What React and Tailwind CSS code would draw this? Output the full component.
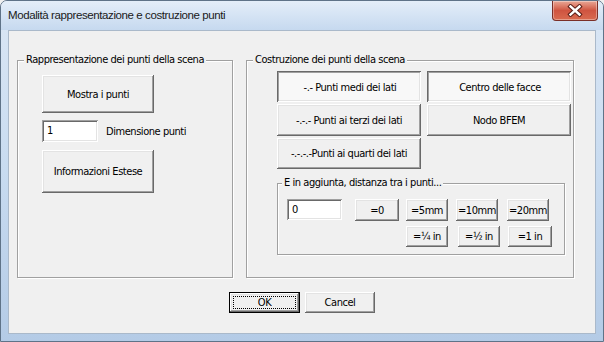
import React from "react";

const F = "font-['DejaVu_Sans_Condensed','DejaVu_Sans',sans-serif] text-[11px] leading-[13px] tracking-[-0.45px] text-black";
const raised =
  "bg-[#f0f0f0] shadow-[inset_-1px_-1px_0_#696969,inset_1px_1px_0_#ffffff,inset_-2px_-2px_0_#a0a0a0,inset_2px_2px_0_#e3e3e3]";
const pressed =
  "bg-[#f8f8f8] shadow-[inset_1px_1px_0_#696969,inset_-1px_-1px_0_#ffffff,inset_2px_2px_0_#a0a0a0,inset_-2px_-2px_0_#e3e3e3]";
const field =
  "bg-white shadow-[inset_1px_1px_0_#a0a0a0,inset_-1px_-1px_0_#ffffff,inset_2px_2px_0_#696969,inset_-2px_-2px_0_#e3e3e3]";

function Btn({ className = "", down = false, children }) {
  return (
    <div className={`flex items-center justify-center ${down ? pressed + " pt-[2px] pl-[2px]" : raised} ${className}`}>
      <span className="whitespace-nowrap">{children}</span>
    </div>
  );
}

function Group({ label, className = "", labelLeft = "left-[6px]", children }) {
  return (
    <div className={`relative border border-[#a0a0a0] shadow-[1px_1px_0_#ffffff,inset_1px_1px_0_#ffffff] ${className}`}>
      <div className={`absolute top-[-8px] ${labelLeft} px-[2px] bg-[#f0f0f0] whitespace-nowrap`}>{label}</div>
      {children}
    </div>
  );
}

export default function App() {
  return (
    <div className="w-[604px] h-[342px] overflow-hidden bg-[#f0f0f0]">
      <div className="relative w-[604px] h-[342px] flex flex-col rounded-t-[7px] border border-[#5f7388] bg-gradient-to-b from-[#dbe7f5] via-[#c8dbf0] to-[#b4cbe6]">
        {/* title bar */}
        <div className="h-[29px] flex items-center pl-[7px] pt-[1px] font-['Liberation_Sans',sans-serif] text-[11.5px] tracking-[-0.4px] text-[#1a1a1a] bg-gradient-to-b from-[#e4eef9] to-[#c6d9ef] rounded-t-[6px]">
          Modalità rappresentazione e costruzione punti
        </div>
        <div className="absolute top-[0px] right-[5px] w-[46px] h-[20px] rounded-b-[4px] border border-t-0 border-[#7a2f27] bg-gradient-to-b from-[#e8a796] via-[#cf5440] to-[#d96a4f] flex items-center justify-center shadow-[inset_0_0_0_1px_rgba(255,255,255,0.35)]">
          <svg width="16" height="13" viewBox="0 0 16 13">
            <path d="M3.5 2.5 L12.5 10.5 M12.5 2.5 L3.5 10.5" stroke="#5a1e17" strokeWidth="4.4" strokeLinecap="square" />
            <path d="M3.5 2.5 L12.5 10.5 M12.5 2.5 L3.5 10.5" stroke="#ffffff" strokeWidth="2.4" strokeLinecap="square" />
          </svg>
        </div>

        {/* client area */}
        <div className={`mx-[7px] mb-[7px] flex-1 border border-[#aab9ca] bg-[#f0f0f0] flex flex-col pl-[8px] pt-[29px] ${F}`}>
          <div className="flex gap-[13px]">
            <Group label="Rappresentazione dei punti della scena" className="w-[216px] h-[218px]">
              <div className="flex flex-col pl-[24px] pt-[14px]">
                <Btn className="w-[112px] h-[38px]">Mostra i punti</Btn>
                <div className="flex items-center mt-[7px] gap-[8px]">
                  <div className={`w-[56px] h-[22px] pl-[5px] pt-[4px] ${field}`}>1</div>
                  <span>Dimensione punti</span>
                </div>
                <Btn className="w-[112px] h-[43px] mt-[8px]">Informazioni Estese</Btn>
              </div>
            </Group>

            <Group label="Costruzione dei punti della scena" className="w-[328px] h-[218px]">
              <div className="flex flex-col pl-[30px] pt-[10px]">
                <div className="grid grid-cols-[144px_144px] gap-x-[6px] gap-y-[2px]">
                  <Btn down className="h-[31px]">-.- Punti medi dei lati</Btn>
                  <Btn down className="h-[31px]">Centro delle facce</Btn>
                  <Btn className="h-[32px]">-.-.- Punti ai terzi dei lati</Btn>
                  <Btn className="h-[32px]">Nodo BFEM</Btn>
                  <Btn className="h-[31px]">-.-.-.-Punti ai quarti dei lati</Btn>
                </div>
                <Group label="E in aggiunta, distanza tra i punti..." labelLeft="left-[4px]" className="w-[288px] h-[72px] mt-[14px]">
                  <div className="flex flex-col pl-[9px] pt-[15px]">
                    <div className="flex">
                      <div className={`w-[55px] h-[21px] pl-[5px] pt-[4px] ${field}`}>0</div>
                      <Btn className="w-[44px] h-[22px] ml-[13px]">=0</Btn>
                      <Btn className="w-[42px] h-[22px] ml-[7px]">=5mm</Btn>
                      <Btn className="w-[42px] h-[22px] ml-[8px]">=10mm</Btn>
                      <Btn className="w-[42px] h-[22px] ml-[9px]">=20mm</Btn>
                    </div>
                    <div className="flex mt-[5px] pl-[119px]">
                      <Btn className="w-[42px] h-[21px]">=¼ in</Btn>
                      <Btn className="w-[42px] h-[21px] ml-[10px]">=½ in</Btn>
                      <Btn className="w-[44px] h-[21px] ml-[8px]">=1 in</Btn>
                    </div>
                  </div>
                </Group>
              </div>
            </Group>
          </div>

          <div className="flex justify-center gap-[5px] mt-[14px] pr-[8px]">
            <div className="relative w-[71px] h-[21px] border border-black">
              <div className={`w-full h-full flex items-center justify-center ${raised}`}>OK</div>
              <div className="absolute inset-[3px] border border-dotted border-black" />
            </div>
            <Btn className="w-[70px] h-[21px]">Cancel</Btn>
          </div>
        </div>
      </div>
    </div>
  );
}
